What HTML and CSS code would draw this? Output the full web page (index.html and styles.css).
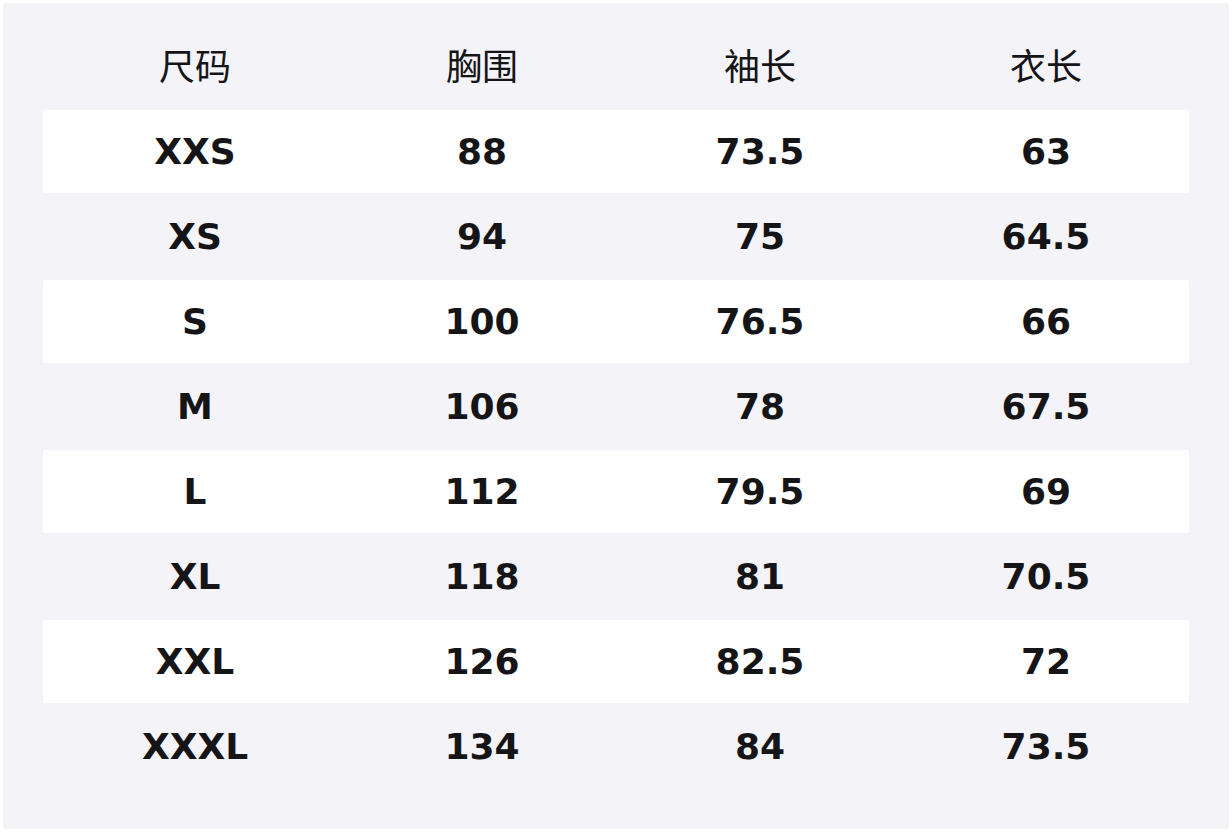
FILE: index.html
```html
<!DOCTYPE html>
<html lang="zh-CN">
<head>
<meta charset="utf-8">
<title>尺码表</title>
<link rel="stylesheet" href="styles.css">
</head>
<body>
<div class="panel">
  <table class="size-table">
    <colgroup>
      <col class="c1"><col class="c2"><col class="c3"><col class="c4">
    </colgroup>
    <thead>
      <tr><th>尺码</th><th>胸围</th><th>袖长</th><th>衣长</th></tr>
    </thead>
    <tbody>
      <tr class="odd"><td>XXS</td><td>88</td><td>73.5</td><td>63</td></tr>
      <tr><td>XS</td><td>94</td><td>75</td><td>64.5</td></tr>
      <tr class="odd"><td>S</td><td>100</td><td>76.5</td><td>66</td></tr>
      <tr><td>M</td><td>106</td><td>78</td><td>67.5</td></tr>
      <tr class="odd"><td>L</td><td>112</td><td>79.5</td><td>69</td></tr>
      <tr><td>XL</td><td>118</td><td>81</td><td>70.5</td></tr>
      <tr class="odd"><td>XXL</td><td>126</td><td>82.5</td><td>72</td></tr>
      <tr><td>XXXL</td><td>134</td><td>84</td><td>73.5</td></tr>
    </tbody>
  </table>
</div>
</body>
</html>
```

FILE: styles.css
```css
html, body {
  margin: 0;
  background: #ffffff;
}
body {
  padding: 3px;
}
.panel {
  width: 1226px;
  box-sizing: border-box;
  background: #f3f3f8;
  padding: 20px 40px 39px;
  border-radius: 2px;
}
.size-table {
  width: 1146px;
  table-layout: fixed;
  border-collapse: separate;
  border-spacing: 0 2px;
}
.c1 { width: 304px; }
.c2 { width: 270px; }
.c3 { width: 286px; }
.c4 { width: 286px; }
.size-table th,
.size-table td {
  height: 83px;
  padding: 0;
  text-align: center;
  vertical-align: middle;
  color: #151517;
}
.size-table th {
  font-family: "Noto Sans CJK SC", "Noto Sans", sans-serif;
  font-weight: 400;
  font-size: 36px;
  padding-bottom: 6px;
  height: 77px;
}
.size-table td {
  font-family: "DejaVu Sans", sans-serif;
  font-weight: 700;
  font-size: 36px;
}
.size-table tr.odd td {
  background: #ffffff;
}
.size-table tr.odd td:first-child {
  border-radius: 2px 0 0 2px;
}
.size-table tr.odd td:last-child {
  border-radius: 0 2px 2px 0;
}
```
